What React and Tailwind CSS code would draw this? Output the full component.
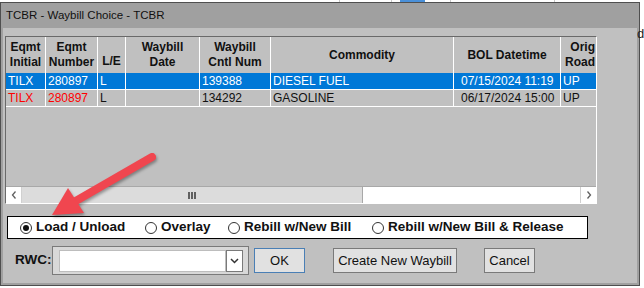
import React from "react";

const cols = [40, 52, 28, 74, 71, 183, 107, 35];

function HeaderCell({ w, lines, extra = "" }) {
  return (
    <div
      className={`shrink-0 border-r border-white flex flex-col items-center justify-center text-[12px] font-bold leading-[15px] text-[#111] ${extra}`}
      style={{ width: w }}
    >
      {lines.map((l, i) => (
        <span key={i} className="whitespace-nowrap">{l}</span>
      ))}
    </div>
  );
}

function Row({ cells, selected, redFirst }) {
  return (
    <div className={`flex h-[17px] border-b border-white ${selected ? "bg-[#0078d7] text-white" : "text-[#111]"}`}>
      {cells.map((c, i) => (
        <div
          key={i}
          className={`shrink-0 h-full leading-[16px] text-[12px] whitespace-nowrap overflow-hidden ${
            i < 7 ? "border-r border-white" : ""
          } ${i === 6 ? "pl-[7px]" : "pl-[2px]"} ${!selected && redFirst && i < 2 ? "text-[#ff0000]" : ""}`}
          style={{ width: cols[i] }}
        >
          {c}
        </div>
      ))}
    </div>
  );
}

function Radio({ checked, label, w }) {
  return (
    <div className="flex items-center shrink-0" style={{ width: w }}>
      <span className="w-[12px] h-[12px] rounded-full border border-[#333] bg-white flex items-center justify-center shrink-0">
        {checked && <span className="w-[6px] h-[6px] rounded-full bg-[#111]" />}
      </span>
      <span className="ml-[4px] text-[13.5px] font-bold text-[#111] whitespace-nowrap">{label}</span>
    </div>
  );
}

export default function App() {
  return (
    <div className="w-[644px] h-[288px] bg-white relative overflow-hidden" style={{ fontFamily: '"Liberation Sans", Arial, sans-serif' }}>
      {/* background strip */}
      <div className="h-[2px] flex">
        <div className="w-[339px]" />
        <div className="w-[52px] border-l border-[#c8c8c8]" />
        <div className="w-[9px] border-l border-[#c8c8c8]" />
        <div className="w-[25px] bg-[#4a90d9]" />
        <div className="w-[25px]" />
        <div className="w-[104px] border-l border-[#c8c8c8]" />
        <div className="w-[20px] border-l border-[#c8c8c8]" />
      </div>
      <div className="flex">
        {/* window */}
        <div className="w-[640px] h-[284px] border border-[#4f4f4f] bg-[#a0a0a0] flex flex-col shrink-0">
          <div className="h-[25px] flex items-center pl-[5px] text-[11.5px] text-[#111] shrink-0">
            TCBR - Waybill Choice - TCBR
          </div>
          <div className="flex-1 mx-[2px] mb-[2px] bg-[#c0c0c0] flex flex-col">
            {/* grid */}
            <div className="mt-[8px] ml-[2px] w-[592px] h-[168px] border-t border-l border-[#696969] border-b border-r border-b-white border-r-white flex flex-col overflow-hidden">
              <div className="flex-1 overflow-hidden">
                <div className="flex h-[36px]">
                  <HeaderCell w={cols[0]} lines={["Eqmt", "Initial"]} />
                  <HeaderCell w={cols[1]} lines={["Eqmt", "Number"]} />
                  <HeaderCell w={cols[2]} lines={["L/E"]} extra="pt-[12px]" />
                  <HeaderCell w={cols[3]} lines={["Waybill", "Date"]} />
                  <HeaderCell w={cols[4]} lines={["Waybill", "Cntl Num"]} />
                  <HeaderCell w={cols[5]} lines={["Commodity"]} />
                  <HeaderCell w={cols[6]} lines={["BOL Datetime"]} />
                  <div className="shrink-0 flex flex-col items-end pr-[1px] justify-center text-[12px] font-bold leading-[15px] text-[#111]" style={{ width: cols[7] }}>
                    <span>Orig</span>
                    <span>Road</span>
                  </div>
                </div>
                <Row selected cells={["TILX", "280897", "L", "", "139388", "DIESEL FUEL", "07/15/2024 11:19", "UP"]} />
                <Row redFirst cells={["TILX", "280897", "L", "", "134292", "GASOLINE", "06/17/2024 15:00", "UP"]} />
              </div>
              {/* scrollbar */}
              <div className="h-[17px] flex shrink-0 border-t border-[#a8a8a8]">
                <div className="w-[16px] bg-white border-r border-[#d0d0d0] flex items-center justify-center">
                  <svg width="8" height="10" viewBox="0 0 8 10"><path d="M5.5 1.5 L2.5 5 L5.5 8.5" fill="none" stroke="#606060" strokeWidth="1.3" /></svg>
                </div>
                <div className="w-[341px] bg-[#dcdcdc] border-r border-[#a8a8a8] flex items-center justify-center">
                  <div className="flex gap-[1px]">
                    <span className="w-[2px] h-[7px] bg-[#606060]" />
                    <span className="w-[2px] h-[7px] bg-[#606060]" />
                    <span className="w-[2px] h-[7px] bg-[#606060]" />
                  </div>
                </div>
                <div className="flex-1 bg-white" />
                <div className="w-[16px] bg-white border-l border-[#d0d0d0] flex items-center justify-center">
                  <svg width="8" height="10" viewBox="0 0 8 10"><path d="M2.5 1.5 L5.5 5 L2.5 8.5" fill="none" stroke="#606060" strokeWidth="1.3" /></svg>
                </div>
              </div>
            </div>
            {/* radio box */}
            <div className="mt-[12px] ml-[4px] w-[581px] h-[23px] border-[1.5px] border-black bg-white flex items-center pl-[12px]">
              <Radio checked label="Load / Unload" w={125} />
              <Radio label="Overlay" w={83} />
              <Radio label="Rebill w/New Bill" w={144} />
              <Radio label="Rebill w/New Bill & Release" w={200} />
            </div>
            {/* bottom row */}
            <div className="mt-[7px] flex items-center h-[29px]">
              <span className="ml-[12px] w-[37px] text-[13.5px] font-bold text-[#111]">RWC:</span>
              <div className="w-[197px] h-[29px] border border-[#7a7a7a] bg-[#d8d8d8] flex items-center pl-[6px]">
                <div className="w-[167px] h-[22px] bg-white border border-[#bdbdbd]" />
                <div className="w-[17px] h-[22px] bg-white border border-[#7a7a7a] flex items-center justify-center">
                  <svg width="9" height="6" viewBox="0 0 9 6"><path d="M1 1 L4.5 4.5 L8 1" fill="none" stroke="#333" strokeWidth="1.5" /></svg>
                </div>
              </div>
              <button className="ml-[5px] w-[51px] h-[25px] border border-[#4a7fb5] bg-[#e1e1e1] text-[13px] text-[#111]">OK</button>
              <button className="ml-[28px] w-[124px] h-[25px] border border-[#7a7a7a] bg-[#e1e1e1] text-[13px] text-[#111]">Create New Waybill</button>
              <button className="ml-[27px] w-[51px] h-[25px] border border-[#7a7a7a] bg-[#e1e1e1] text-[13px] text-[#111]">Cancel</button>
            </div>
          </div>
        </div>
        <div className="flex-1 overflow-hidden text-[13px] text-[#222] pt-[22px] -ml-[3px]">d</div>
      </div>
      {/* annotation arrow */}
      <svg className="absolute inset-0 pointer-events-none" width="644" height="288" viewBox="0 0 644 288" style={{ filter: "drop-shadow(1px 2px 1.5px rgba(0,0,0,0.35))" }}>
        <line x1="152" y1="157" x2="74" y2="202" stroke="#f0464f" strokeWidth="8" strokeLinecap="round" />
        <polygon points="52,215 68,188 84,213" fill="#f0464f" />
      </svg>
    </div>
  );
}
